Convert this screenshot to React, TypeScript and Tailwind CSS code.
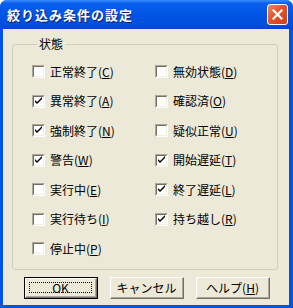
import React from "react";

const font = { fontFamily: '"Noto Sans CJK JP", "Noto Sans", sans-serif' };

function Check({ checked }: { checked: boolean }) {
  return (
    <div className="w-[13px] h-[13px] border-t border-l border-t-[#ACA899] border-l-[#ACA899] border-b border-r border-b-white border-r-white shrink-0">
      <div className="w-full h-full border-t border-l border-t-[#716F64] border-l-[#716F64] border-b border-r border-b-[#F1EFE2] border-r-[#F1EFE2] bg-white">
        {checked && (
          <svg width="9" height="9" viewBox="0 0 9 9" className="block">
            <path d="M1 3 L1 5 L3 7 L8 2 L8 0 L3 5 Z" fill="#000" />
          </svg>
        )}
      </div>
    </div>
  );
}

function Row({ label, k, checked }: { label: string; k: string; checked: boolean }) {
  return (
    <div className="h-[29.5px] flex items-center gap-[5px]">
      <Check checked={checked} />
      <span className="text-[12px] leading-none text-black whitespace-nowrap">
        {label}(<span className="underline">{k}</span>)
      </span>
    </div>
  );
}

function Btn({ children, def }: { children: React.ReactNode; def?: boolean }) {
  const inner = (
    <div className="h-full w-full border-t border-l border-t-white border-l-white border-b border-r border-b-[#716F64] border-r-[#716F64]">
      <div className="h-full w-full border-b border-r border-b-[#ACA899] border-r-[#ACA899] flex items-center justify-center bg-[#ECE9D8] p-[3px]">
        {def ? (
          <div className="w-full h-full border border-dotted border-black flex items-center justify-center text-[12px] leading-none">
            {children}
          </div>
        ) : (
          <span className="text-[12px] leading-none">{children}</span>
        )}
      </div>
    </div>
  );
  return (
    <div className={"w-[74px] h-[22px] " + (def ? "border border-black" : "")}>
      {inner}
    </div>
  );
}

export default function App() {
  const left: [string, string, boolean][] = [
    ["正常終了", "C", false],
    ["異常終了", "A", true],
    ["強制終了", "N", true],
    ["警告", "W", true],
    ["実行中", "E", false],
    ["実行待ち", "I", false],
    ["停止中", "P", false],
  ];
  const right: [string, string, boolean][] = [
    ["無効状態", "D", false],
    ["確認済", "O", false],
    ["疑似正常", "U", false],
    ["開始遅延", "T", true],
    ["終了遅延", "L", true],
    ["持ち越し", "R", true],
  ];
  return (
    <div
      className="w-[293px] h-[308px] flex flex-col bg-[#0054E3] rounded-t-[7px] overflow-hidden"
      style={font}
    >
      <div className="h-[29px] shrink-0 flex items-center justify-between pl-[7px] pr-[5px] bg-[linear-gradient(180deg,#3A8CFF_0%,#0A5EEC_12%,#0055E5_50%,#004EDD_85%,#0043CF_100%)]">
        <span className="text-white font-bold text-[13px] tracking-[1px] leading-none [text-shadow:1px_1px_0_#0A1F6B]">
          絞り込み条件の設定
        </span>
        <div className="w-[21px] h-[21px] rounded-[3px] border border-white bg-[linear-gradient(135deg,#EB8A66_0%,#E0532D_45%,#C8401A_100%)] flex items-center justify-center">
          <svg width="11" height="11" viewBox="0 0 11 11">
            <path d="M1.5 1.5 L9.5 9.5 M9.5 1.5 L1.5 9.5" stroke="#fff" strokeWidth="2.2" strokeLinecap="square" />
          </svg>
        </div>
      </div>
      <div className="flex-1 ml-[3px] mr-[4px] mb-[3px] bg-[#ECE9D8] flex flex-col">
        <fieldset className="ml-[9px] mt-[9px] w-[266px] h-[232px] border border-[#D0D0BF] rounded-[3px] px-[19px] pt-[7px]">
          <legend className="px-[2px] ml-[5px] text-[12px] leading-none text-black">状態</legend>
          <div className="flex">
            <div className="w-[123px] flex flex-col">
              {left.map(([l, k, c]) => (
                <Row key={l} label={l} k={k} checked={c} />
              ))}
            </div>
            <div className="flex flex-col">
              {right.map(([l, k, c]) => (
                <Row key={l} label={l} k={k} checked={c} />
              ))}
            </div>
          </div>
        </fieldset>
        <div className="flex gap-[12px] ml-[21px] mt-[7px]">
          <Btn def>OK</Btn>
          <Btn>キャンセル</Btn>
          <Btn>
            ヘルプ(<span className="underline">H</span>)
          </Btn>
        </div>
      </div>
    </div>
  );
}
